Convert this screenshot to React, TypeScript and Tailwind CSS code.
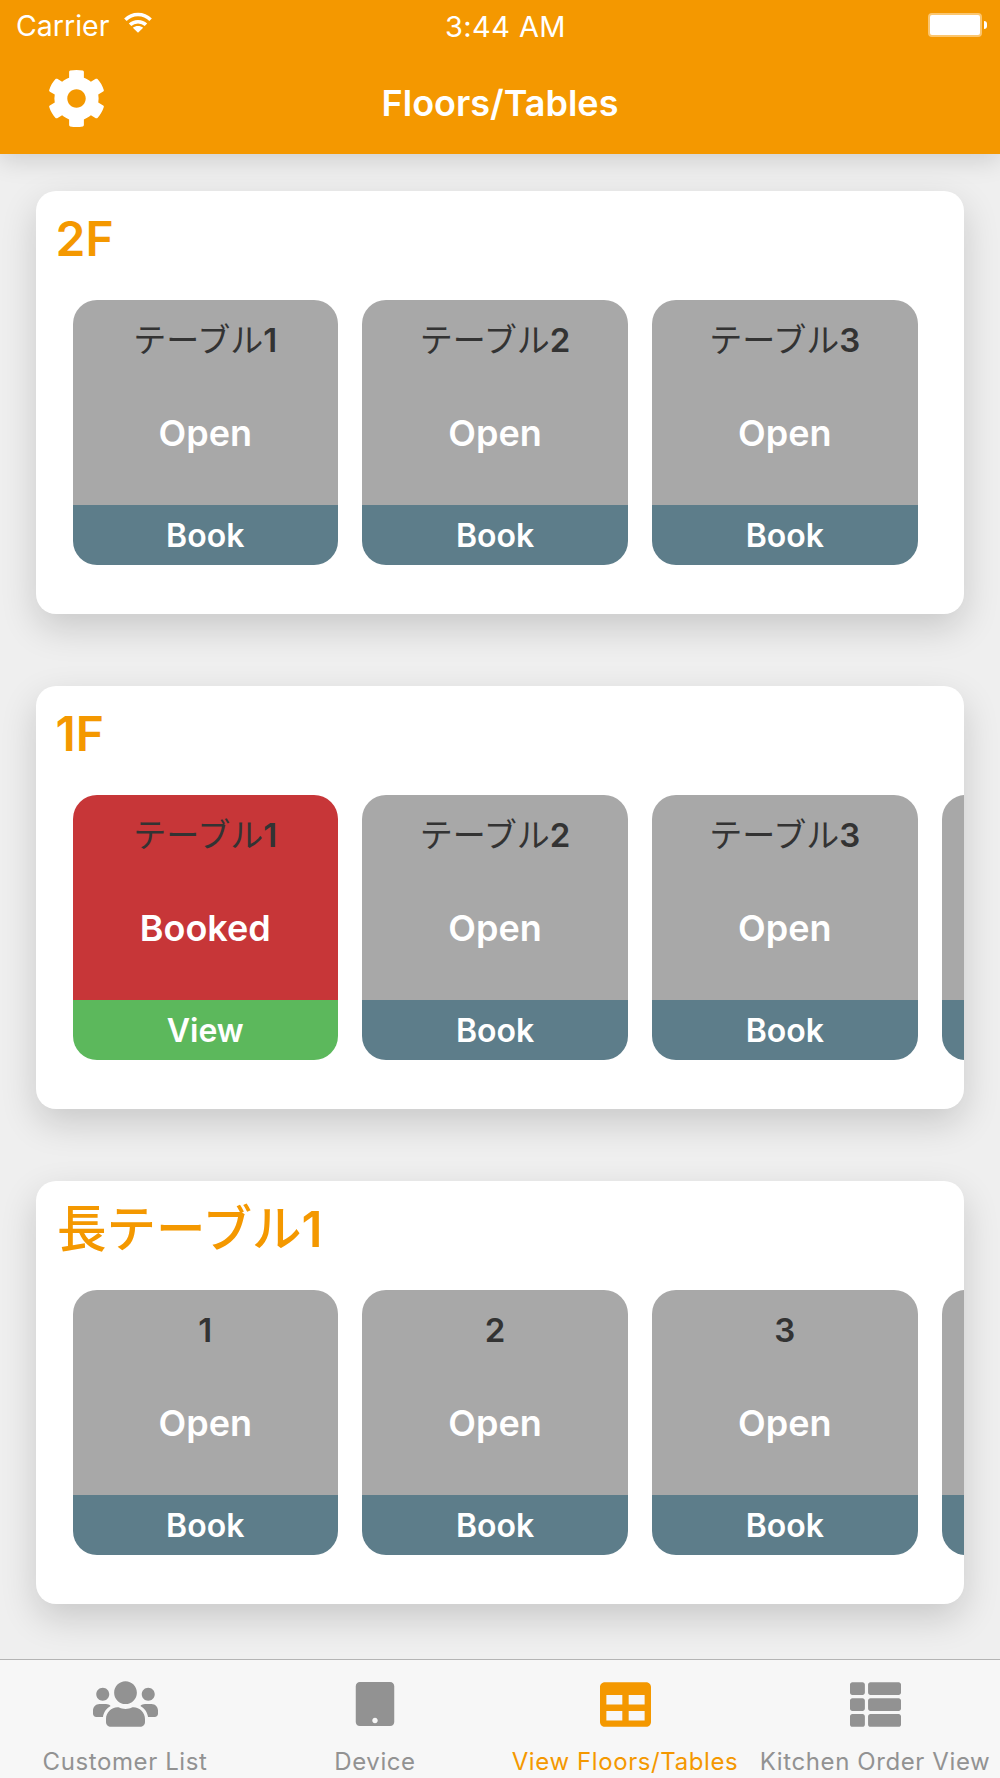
import { FaCog, FaTable, FaTablet, FaThList, FaUsers } from "react-icons/fa"

type Tile = { name?: string; kana?: boolean; booked?: boolean }

const floors: { title: string; tiles: Tile[] }[] = [
  {
    title: "2F",
    tiles: [
      { name: "1", kana: true },
      { name: "2", kana: true },
      { name: "3", kana: true },
    ],
  },
  {
    title: "1F",
    tiles: [{ name: "1", kana: true, booked: true }, { name: "2", kana: true }, { name: "3", kana: true }, {}],
  },
  {
    title: "長テーブル1",
    tiles: [{ name: "1" }, { name: "2" }, { name: "3" }, {}],
  },
]

function TableTile({ tile }: { tile: Tile }) {
  // the last tile of a row only peeks in at the card edge, so it has no labels
  const peek = !tile.name
  return (
    <div className="w-[265.5px] h-[265px] shrink-0 rounded-[24px] overflow-hidden flex flex-col">
      <div className={`flex-1 flex flex-col items-center ${tile.booked ? "bg-[#c73638]" : "bg-[#a8a8a8]"}`}>
        {!peek && (
          <>
            <div className="mt-[20px] h-[40px] leading-[40px] text-[33px] font-semibold text-[#333333]">
              {tile.kana && <span className="font-normal">テーブル</span>}
              {tile.name}
            </div>
            <div className="mt-[53px] h-[40px] leading-[40px] text-[36px] font-semibold text-white">
              {tile.booked ? "Booked" : "Open"}
            </div>
          </>
        )}
      </div>
      <div
        className={`h-[60px] pt-[1px] flex items-center justify-center text-[32px] font-semibold text-white ${
          tile.booked ? "bg-[#5cb85c]" : "bg-[#5d7d8a]"
        }`}
      >
        {!peek && (tile.booked ? "View" : "Book")}
      </div>
    </div>
  )
}

function FloorCard({ title, tiles }: { title: string; tiles: Tile[] }) {
  return (
    <div className="h-[423px] bg-white rounded-[20px] shadow-[0_14px_36px_rgba(0,0,0,0.16)] overflow-hidden">
      <div className="h-[109px] pl-[19.5px] pt-[19px] text-[48px] leading-[58px] font-semibold text-[#f49800]">
        {title === "長テーブル1" ? (
          <span className="pl-[1.5px] text-[49.5px]">
            <span className="font-medium">長テーブル</span>1
          </span>
        ) : (
          title
        )}
      </div>
      <div className="flex gap-[24.3px] pl-[36.5px]">
        {tiles.map((t, i) => (
          <TableTile key={i} tile={t} />
        ))}
      </div>
    </div>
  )
}

function TabItem({ label, active, children }: { label: string; active?: boolean; children: React.ReactNode }) {
  return (
    <div className={`w-[250px] flex flex-col items-center ${active ? "text-[#f49800]" : "text-[#929292]"}`}>
      <div className="h-[52px] mt-[18px] flex items-center justify-center">{children}</div>
      <div className="mt-[17px] text-[24px] leading-[30px] tracking-[0.6px] whitespace-nowrap">{label}</div>
    </div>
  )
}

export default function App() {
  return (
    <div
      className="w-[1000px] h-[1778px] flex flex-col bg-[#efefef] overflow-hidden"
      style={{ fontFamily: 'Inter, "Noto Sans CJK JP", sans-serif' }}
    >
      <header className="relative z-10 h-[154px] shrink-0 bg-[#f49800] text-white shadow-[0_6px_24px_rgba(0,0,0,0.14)]">
        <div className="h-[50px] px-[16px] pt-[2px] flex items-center justify-between text-[28.5px]">
          <div className="flex items-center gap-[15px]">
            <span>Carrier</span>
            <svg viewBox="0 0 30 22" className="w-[28px] h-[21px] -mt-[7px]" fill="none" stroke="white" strokeWidth="3.8">
              <path d="M1.5 8 C9 0.5 21 0.5 28.5 8" />
              <path d="M6.5 13.5 C11 9 19 9 23.5 13.5" />
              <path d="M15 22 L9.5 16.5 C12.5 14 17.5 14 20.5 16.5 Z" fill="white" stroke="none" />
            </svg>
          </div>
          <span className="absolute left-[445px] top-[5px] text-[29px] tracking-[0.4px]">3:44 AM</span>
          <div className="flex items-center gap-[2px] -mr-[3px]">
            <div className="w-[54px] h-[24px] rounded-[4px] border-2 border-[#fbc670] bg-white -mt-[2px]" />
            <div className="w-[3px] h-[8px] rounded-r-[3px] bg-white -mt-[2px]" />
          </div>
        </div>
        <div className="h-[104px] pt-[2px] flex items-center justify-center relative">
          <FaCog className="absolute left-[47px] top-[19px] w-[59px] h-[59px]" />
          <h1 className="text-[36px] font-semibold">Floors/Tables</h1>
        </div>
      </header>

      <main className="flex-1 px-[36px] pt-[37px] flex flex-col gap-[72px] overflow-hidden">
        {floors.map((f) => (
          <FloorCard key={f.title} title={f.title} tiles={f.tiles} />
        ))}
      </main>

      <nav className="h-[119px] shrink-0 relative z-10 bg-[#f7f7f7] border-t border-[#b4b4b4] flex">
        <TabItem label="Customer List">
          <FaUsers className="w-[65px] h-[52px]" />
        </TabItem>
        <TabItem label="Device">
          <FaTablet className="w-[44px] h-[44px]" />
        </TabItem>
        <TabItem label="View Floors/Tables" active>
          <FaTable className="w-[51px] h-[51px]" />
        </TabItem>
        <TabItem label="Kitchen Order View">
          <FaThList className="w-[51px] h-[51px]" />
        </TabItem>
      </nav>
    </div>
  )
}
